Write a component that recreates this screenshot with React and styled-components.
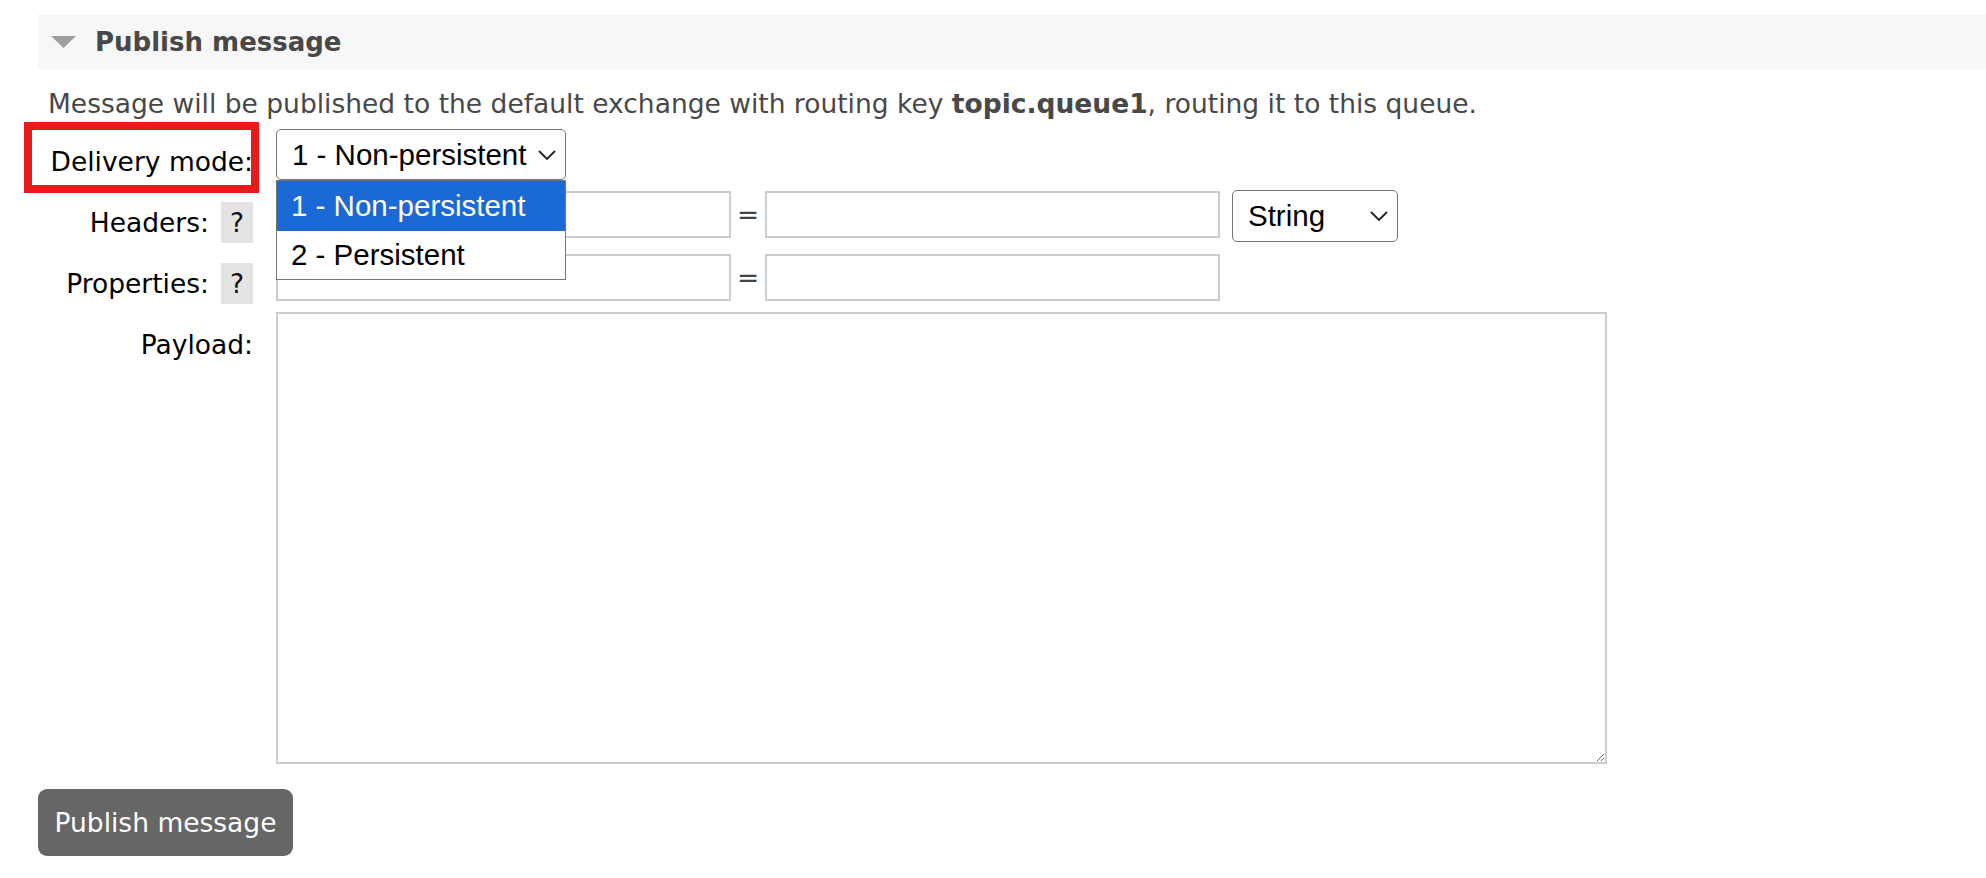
import styled, { createGlobalStyle } from "styled-components";

const GlobalStyle = createGlobalStyle`
  html, body {
    margin: 0;
    padding: 0;
    background: #fff;
  }
  body {
    font-family: "DejaVu Sans", Verdana, sans-serif;
    font-size: 26.5px;
    color: #484848;
  }
`;

const Page = styled.div`
  padding: 14px 0 20px 38px;
`;

const SectionHeader = styled.div`
  height: 55px;
  background: #f7f7f7;
  display: flex;
  align-items: center;
  gap: 19px;
  padding-left: 13px;
`;

const Title = styled.h2`
  margin: 0;
  font-size: 26px;
  font-weight: bold;
  color: #484848;
`;

const Intro = styled.p`
  margin: 21px 0 0 10px;
  line-height: 28px;
  color: #484848;

  b {
    font-weight: bold;
  }
`;

const Form = styled.div`
  margin-top: 11px;
  display: grid;
  grid-template-columns: 215px 1fr;
  column-gap: 23px;
  row-gap: 8px;
`;

const Label = styled.div`
  position: relative;
  display: flex;
  justify-content: flex-end;
  align-items: center;
  gap: 12px;
  height: 41px;
  margin-top: 12px;
  color: #000;
  white-space: nowrap;
`;

const Highlight = styled.div`
  position: absolute;
  top: -19px;
  left: -14px;
  right: -6px;
  bottom: -11px;
  border: 8px solid #e61c1c;
  pointer-events: none;
`;

const Help = styled.span`
  display: inline-flex;
  align-items: center;
  justify-content: center;
  width: 32px;
  height: 41px;
  background: #e4e4e4;
  color: #111;
`;

const Field = styled.div`
  display: flex;
  align-items: flex-start;
`;

const TextInput = styled.input`
  box-sizing: border-box;
  width: 455px;
  height: 47px;
  margin-top: ${(p) => p.$offset || 0}px;
  border: 2px solid #ccc;
  border-radius: 0;
  padding: 0 8px;
  font: inherit;
  outline: none;
`;

const Equals = styled.span`
  width: 34px;
  height: 47px;
  margin-top: ${(p) => p.$offset || 0}px;
  display: flex;
  align-items: center;
  justify-content: center;
  color: #444;
`;

const SelectWrap = styled.div`
  position: relative;
  margin-left: ${(p) => p.$gap || 0}px;
`;

const SelectBox = styled.div`
  box-sizing: border-box;
  width: ${(p) => p.$width}px;
  height: ${(p) => p.$height}px;
  border: 1.5px solid #767676;
  border-radius: 5px;
  background: #fff;
  display: flex;
  align-items: center;
  justify-content: space-between;
  padding: 0 9px 0 15px;
  font-family: "Liberation Sans", Arial, sans-serif;
  font-size: 29.5px;
  color: #000;
`;

const OptionList = styled.div`
  position: absolute;
  top: 100%;
  left: 0;
  width: 100%;
  box-sizing: border-box;
  border: 1px solid #767676;
  background: #fff;
  z-index: 5;
`;

const Option = styled.div`
  height: ${(p) => p.$height}px;
  display: flex;
  align-items: center;
  padding-left: 14px;
  font-family: "Liberation Sans", Arial, sans-serif;
  font-size: 29.5px;
  background: ${(p) => (p.$selected ? "#1a69d4" : "#fff")};
  color: ${(p) => (p.$selected ? "#fff" : "#000")};
`;

const Payload = styled.textarea`
  box-sizing: border-box;
  width: 1331px;
  height: 452px;
  border: 2px solid #ccc;
  border-radius: 0;
  font: inherit;
  outline: none;
  resize: both;
`;

const Button = styled.button`
  margin-top: 25px;
  width: 255px;
  height: 67px;
  border: none;
  border-radius: 9px;
  background: #666;
  color: #fff;
  font-family: "DejaVu Sans", Verdana, sans-serif;
  font-size: 26.5px;
  cursor: pointer;
`;

function Chevron() {
  return (
    <svg width="18" height="10" viewBox="0 0 18 10">
      <polyline points="1,1 9,9 17,1" fill="none" stroke="#222" strokeWidth="1.8" />
    </svg>
  );
}

function Triangle() {
  return (
    <svg width="25" height="12" viewBox="0 0 25 12">
      <polygon points="0,0 25,0 12.5,12" fill="#9e9e9e" />
    </svg>
  );
}

export default function App() {
  return (
    <>
      <GlobalStyle />
      <Page>
        <SectionHeader>
          <Triangle />
          <Title>Publish message</Title>
        </SectionHeader>

        <Intro>
          Message will be published to the default exchange with routing key{" "}
          <b>topic.queue1</b>, routing it to this queue.
        </Intro>

        <Form>
          <Label>
            Delivery mode:
            <Highlight />
          </Label>
          <Field>
            <SelectWrap>
              <SelectBox $width={290} $height={51}>
                <span>1 - Non-persistent</span>
                <Chevron />
              </SelectBox>
              <OptionList>
                <Option $height={50} $selected>
                  1 - Non-persistent
                </Option>
                <Option $height={48}>2 - Persistent</Option>
              </OptionList>
            </SelectWrap>
          </Field>

          <Label>
            Headers: <Help>?</Help>
          </Label>
          <Field>
            <TextInput $offset={1} />
            <Equals $offset={1}>=</Equals>
            <TextInput $offset={1} />
            <SelectWrap $gap={12}>
              <SelectBox $width={166} $height={52}>
                <span>String</span>
                <Chevron />
              </SelectBox>
            </SelectWrap>
          </Field>

          <Label>
            Properties: <Help>?</Help>
          </Label>
          <Field>
            <TextInput $offset={3} />
            <Equals $offset={3}>=</Equals>
            <TextInput $offset={3} />
          </Field>

          <Label>Payload:</Label>
          <Field>
            <Payload />
          </Field>
        </Form>

        <Button>Publish message</Button>
      </Page>
    </>
  );
}
